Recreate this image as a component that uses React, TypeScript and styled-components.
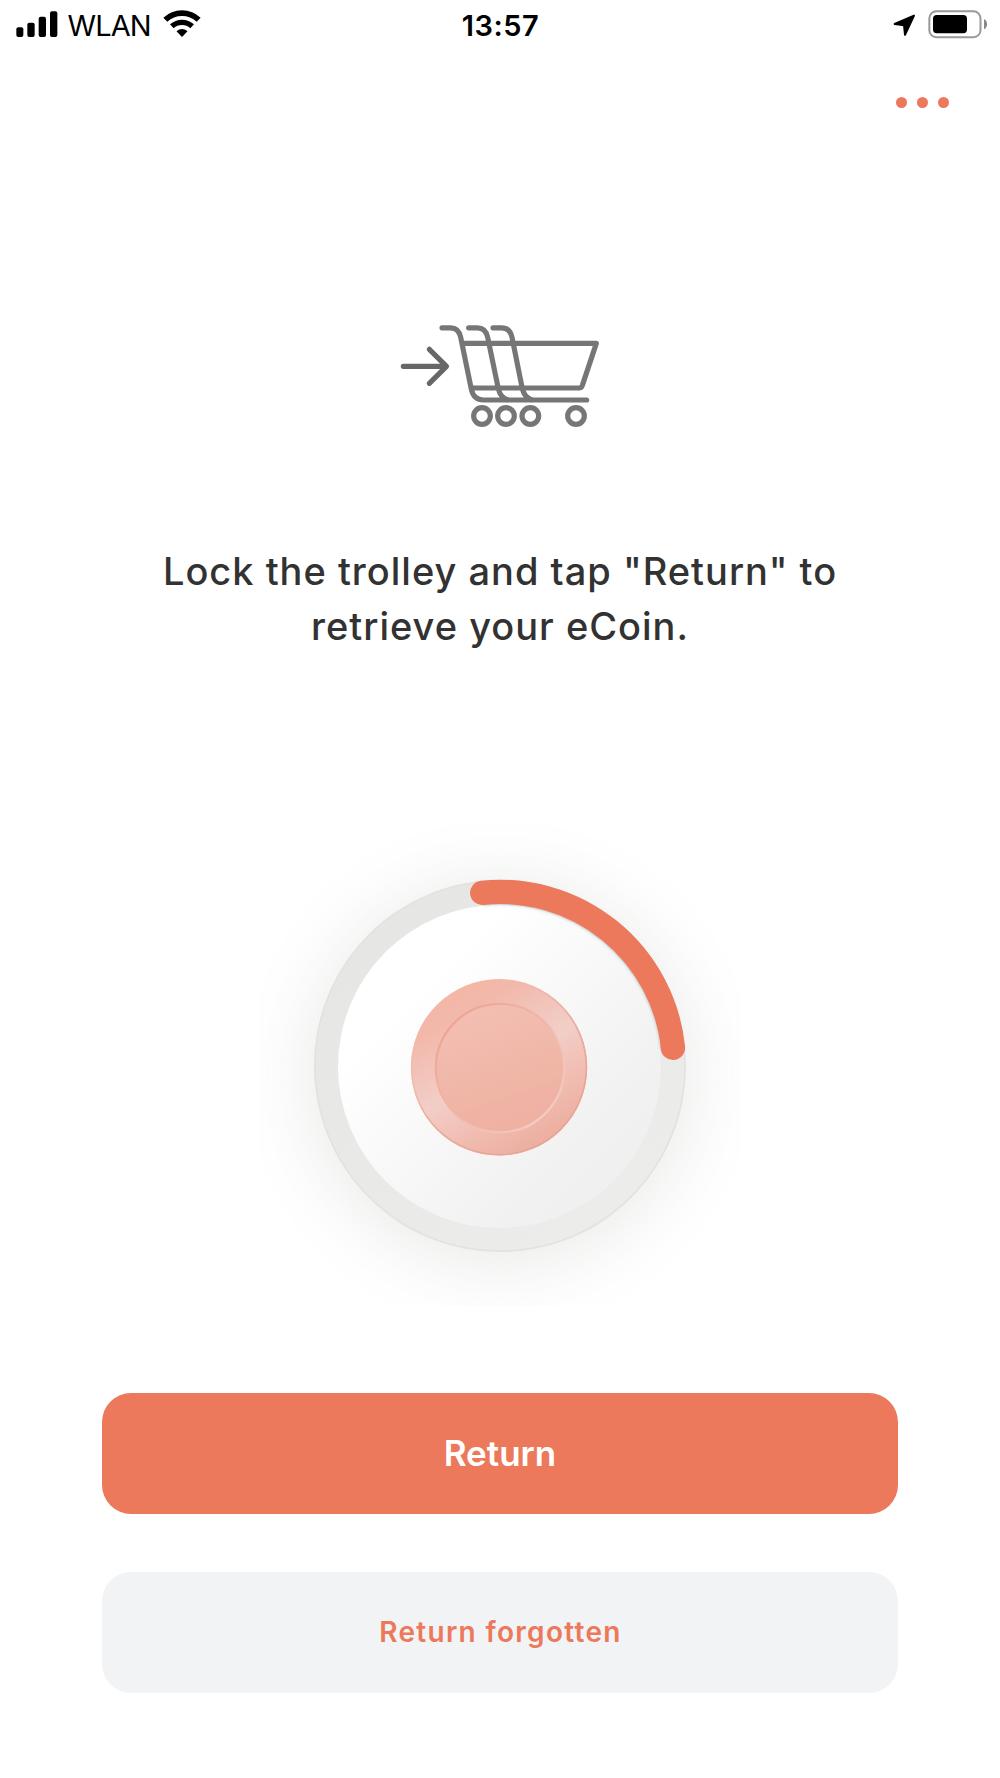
import React from "react";
import styled, { createGlobalStyle } from "styled-components";

const ACCENT = "#ec795b";

const GlobalStyle = createGlobalStyle`
  * { box-sizing: border-box; }
  body { margin: 0; background: #fff; }
`;

const Screen = styled.main`
  display: flex;
  flex-direction: column;
  align-items: center;
  width: 1000px;
  height: 1778px;
  overflow: hidden;
  background: #fff;
  font-family: Inter, "Liberation Sans", sans-serif;
`;

const StatusBar = styled.header`
  display: grid;
  grid-template-columns: 1fr auto 1fr;
  align-items: center;
  width: 100%;
  height: 50px;
  padding: 0 12px 0 16px;
  color: #000;
  font-size: 29px;
  line-height: 48px;
`;

const StatusGroup = styled.div<{ $end?: boolean }>`
  display: flex;
  align-items: center;
  justify-content: ${(p) => (p.$end ? "flex-end" : "flex-start")};
`;

const Network = styled.span`
  margin: 0 12.5px 0 9.5px;
  padding-top: 2px;
  letter-spacing: -0.9px;
`;

const Clock = styled.time`
  padding: 2px 3px 0 0;
  font-weight: 600;
  letter-spacing: 0.5px;
`;

const Glyph = styled.svg`
  display: block;
  flex: none;
`;

const Toolbar = styled.nav`
  display: flex;
  justify-content: flex-end;
  width: 100%;
  height: 105px;
  padding: 46.600px 50.800px 0 0;
`;

const MoreButton = styled.button`
  display: flex;
  gap: 9.6px;
  height: 12px;
  padding: 0;
  border: 0;
  background: none;
`;

const Dot = styled.span`
  width: 11.4px;
  height: 11.4px;
  border-radius: 50%;
  background: ${ACCENT};
`;

const CartArt = styled(Glyph)`
  margin-top: 155px;
`;

const Message = styled.h1`
  margin: 104px 0 0;
  color: #323232;
  font-size: 38px;
  font-weight: 500;
  line-height: 54.5px;
  letter-spacing: 1px;
  text-align: center;
`;

const Dial = styled(Glyph)`
  margin-top: 173px;
`;

const Actions = styled.div`
  display: flex;
  flex-direction: column;
  gap: 58px;
  width: 796px;
  margin-top: 87px;
`;

const ActionButton = styled.button<{ $primary?: boolean }>`
  height: 121px;
  padding: 0 0 2px ${(p) => (p.$primary ? 0 : 1)}px;
  border: 0;
  border-radius: 29px;
  background: ${(p) => (p.$primary ? ACCENT : "#f2f3f5")};
  color: ${(p) => (p.$primary ? "#fff" : ACCENT)};
  font-family: inherit;
  font-size: ${(p) => (p.$primary ? 35 : 28)}px;
  font-weight: 600;
  letter-spacing: ${(p) => (p.$primary ? 0 : 1.3)}px;
`;

const SignalIcon = () => (
  <Glyph width="42" height="50" viewBox="48 0 126 150">
    <rect x="49" y="82" width="21" height="29" rx="6" />
    <rect x="82" y="68" width="22" height="43" rx="6" />
    <rect x="116" y="50" width="22" height="61" rx="6" />
    <rect x="150" y="34" width="22" height="77" rx="6" />
  </Glyph>
);

const WifiIcon = () => (
  <Glyph width="38" height="50" viewBox="487 0 114 150">
    <path d="M494 59.500A72 72 0 0 1 594 59.500" fill="none" stroke="#000" strokeWidth="17" />
    <path d="M513.500 79A45 45 0 0 1 574.500 79" fill="none" stroke="#000" strokeWidth="16" />
    <path d="M544 111L527.500 93.500Q544 80 560.500 93.500Z" />
  </Glyph>
);

const LocationIcon = () => (
  <Glyph width="35" height="50" viewBox="98 0 105 150">
    <path
      d="M161 47L103 72L131 75.500L134 104.500Z"
      stroke="#000"
      strokeWidth="6"
      strokeLinejoin="round"
    />
  </Glyph>
);

const BatteryIcon = () => (
  <Glyph width="60" height="50" viewBox="204 0 180 150">
    <rect x="208" y="34" width="153.500" height="77.500" rx="21" fill="none" stroke="#999" strokeWidth="6" />
    <rect x="219" y="45" width="102" height="54.500" rx="11" />
    <path d="M372 57Q381 62 381 72.500T372 88Z" fill="#888" />
  </Glyph>
);

const TrolleyIcon = () => (
  <CartArt
    width="220"
    height="130"
    viewBox="0 0 660 390"
    fill="none"
    stroke="#767676"
    strokeWidth="15.500"
    strokeLinecap="round"
    strokeLinejoin="round"
  >
    <path d="M156 53.500H182Q206 53.500 212 82L244 238Q251 270 280 270H590" />
    <path d="M236 53.500H262Q287 53.500 293 82L325 236Q331 262 352 269" />
    <path d="M309 53.500H335Q360 53.500 366 82L397 236Q403 262 424 269" />
    <path d="M219 100H619L577 226Q574 234 568 234H246" />
    {[276, 348, 421, 558].map((x) => (
      <circle key={x} cx={x} cy="318" r="25" />
    ))}
    <path d="M40 169H169M118 118L169.500 169L118 220" stroke="#686667" />
  </CartArt>
);

const CoinDial = () => (
  <Dial width="482" height="480" viewBox="259 826 482 480">
    <defs>
      <filter id="soft" x="-50%" y="-50%" width="200%" height="200%">
        <feGaussianBlur stdDeviation="36" />
      </filter>
      <filter id="edge" x="-20%" y="-20%" width="140%" height="140%">
        <feGaussianBlur stdDeviation="1" />
      </filter>
      <linearGradient id="track" x1="0.2" y1="0.1" x2="0.8" y2="0.9">
        <stop offset="0" stopColor="#e6e6e5" />
        <stop offset="0.5" stopColor="#e9e9e8" />
        <stop offset="1" stopColor="#ececea" />
      </linearGradient>
      <linearGradient id="disc" x1="0.15" y1="0.15" x2="0.85" y2="0.85">
        <stop offset="0.15" stopColor="#fff" />
        <stop offset="0.85" stopColor="#f1f1f1" />
        <stop offset="1" stopColor="#f0f0f0" />
      </linearGradient>
      <linearGradient id="rim" x1="0.25" y1="0.07" x2="0.75" y2="0.93">
        <stop offset="0" stopColor="#f3b7a6" />
        <stop offset="0.12" stopColor="#f2b8aa" />
        <stop offset="0.5" stopColor="#f2cec8" />
        <stop offset="0.75" stopColor="#f1bdb2" />
        <stop offset="1" stopColor="#ecae9f" />
      </linearGradient>
      <linearGradient id="rimEdge" x1="0.2" y1="0.1" x2="0.8" y2="0.9">
        <stop offset="0.1" stopColor="#f0b3a5" stopOpacity="0" />
        <stop offset="0.5" stopColor="#ebac9c" />
        <stop offset="1" stopColor="#e7a494" />
      </linearGradient>
      <linearGradient id="face" x1="0.33" y1="0.03" x2="0.67" y2="0.97">
        <stop offset="0" stopColor="#f3beb2" />
        <stop offset="0.7" stopColor="#efb5a5" />
        <stop offset="0.8" stopColor="#efb2a4" />
        <stop offset="1" stopColor="#eeb1a2" />
      </linearGradient>
      <linearGradient id="faceEdge" x1="0.15" y1="0.15" x2="0.85" y2="0.85">
        <stop offset="0" stopColor="#efa594" />
        <stop offset="0.5" stopColor="#f0b2a5" stopOpacity="0.7" />
        <stop offset="0.7" stopColor="#f2c0b5" stopOpacity="0.5" />
        <stop offset="1" stopColor="#f4cac1" />
      </linearGradient>
    </defs>
    <circle cx="500" cy="1074" r="190" fill="#7d7d74" opacity="0.16" filter="url(#soft)" />
    <circle cx="500" cy="1066" r="186" fill="#e2e2e0" />
    <circle cx="500" cy="1066" r="184.300" fill="url(#track)" />
    <circle cx="499.500" cy="1066.500" r="161.500" fill="url(#disc)" />
    <path
      d="M482 894A173.500 173.500 0 0 1 672 1049"
      fill="none"
      stroke="#9aa6aa"
      strokeWidth="25"
      opacity="0.25"
      filter="url(#edge)"
    />
    <path
      d="M482.200 892.800A173.700 173.700 0 0 1 673 1047.900"
      fill="none"
      stroke={ACCENT}
      strokeWidth="24.300"
      strokeLinecap="round"
    />
    <circle cx="499" cy="1067.300" r="88.200" fill="url(#rim)" />
    <circle cx="499" cy="1067.300" r="87.400" fill="none" stroke="url(#rimEdge)" strokeWidth="1.600" />
    <circle cx="499.500" cy="1067.500" r="64" fill="url(#face)" />
    <circle cx="500" cy="1068" r="64.200" fill="none" stroke="url(#faceEdge)" strokeWidth="2.200" />
  </Dial>
);

export default function App() {
  return (
    <Screen>
      <GlobalStyle />
      <StatusBar>
        <StatusGroup>
          <SignalIcon />
          <Network>WLAN</Network>
          <WifiIcon />
        </StatusGroup>
        <Clock>13:57</Clock>
        <StatusGroup $end>
          <LocationIcon />
          <BatteryIcon />
        </StatusGroup>
      </StatusBar>
      <Toolbar>
        <MoreButton aria-label="More">
          <Dot />
          <Dot />
          <Dot />
        </MoreButton>
      </Toolbar>
      <TrolleyIcon />
      <Message>
        Lock the trolley and tap "Return" to
        <br />
        retrieve your eCoin.
      </Message>
      <CoinDial />
      <Actions>
        <ActionButton $primary>Return</ActionButton>
        <ActionButton>Return forgotten</ActionButton>
      </Actions>
    </Screen>
  );
}
